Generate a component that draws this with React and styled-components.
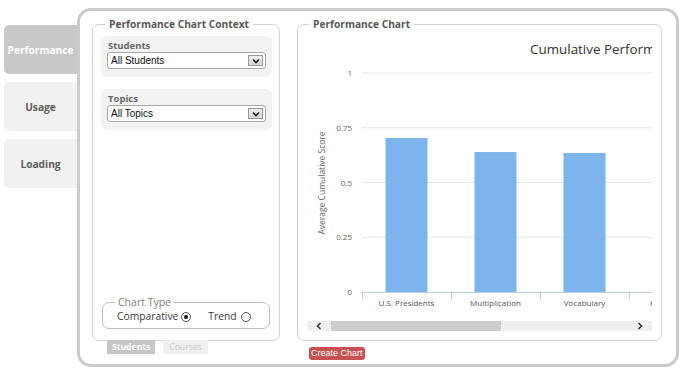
import styled, { createGlobalStyle } from "styled-components";

const GlobalStyle = createGlobalStyle`
  html, body {
    margin: 0;
    padding: 0;
    background: #fff;
  }
  body {
    width: 685px;
    height: 375px;
    overflow: hidden;
    font-family: "Open Sans", "Liberation Sans", sans-serif;
  }
`;

const Page = styled.div`
  display: flex;
  align-items: flex-start;
  padding: 8px 0 0 4px;
`;

const TabColumn = styled.div`
  display: flex;
  flex-direction: column;
  gap: 8px;
  width: 73px;
  margin-top: 17px;
`;

const SideTab = styled.div`
  height: 49px;
  display: flex;
  align-items: center;
  justify-content: center;
  border-radius: 5px 0 0 5px;
  background: ${(p) => (p.active ? "#c8c8c8" : "#f1f1f1")};
  color: ${(p) => (p.active ? "#fff" : "#5c5c5c")};
  font-size: 10.2px;
  font-weight: 700;
`;

const Box = styled.div`
  box-sizing: border-box;
  width: 602px;
  height: 359px;
  border: 3px solid #cbcbcb;
  border-radius: 14px;
  padding: 6px 14px 0 12px;
  display: flex;
  gap: 17px;
`;

const Column = styled.div`
  display: flex;
  flex-direction: column;
  width: ${(p) => p.width}px;
`;

const Panel = styled.fieldset`
  box-sizing: border-box;
  margin: 0;
  height: 324px;
  padding: ${(p) => p.pad};
  border: 1px solid #d2d2d2;
  border-radius: 7px;
  min-width: 0;
`;

const Legend = styled.legend`
  padding: 0 4px;
  margin-left: ${(p) => p.offset || 0}px;
  font-size: 10.2px;
  line-height: 14px;
  font-weight: 700;
  color: #585858;
`;

const PanelBody = styled.div`
  height: ${(p) => p.height}px;
  display: flex;
  flex-direction: column;
`;

const Group = styled.div`
  background: #f2f2f2;
  border-radius: 6px;
  padding: 4px 6px 8px;
  margin-bottom: 12px;
`;

const GroupLabel = styled.div`
  font-size: 9.5px;
  line-height: 12px;
  font-weight: 700;
  color: #666;
  padding-left: 1px;
`;

const Select = styled.div`
  box-sizing: border-box;
  height: 17px;
  background: #fff;
  border: 1px solid #a9a9a9;
  border-radius: 3px;
  display: flex;
  align-items: center;
  justify-content: space-between;
  padding: 0 2px 0 3px;
  font-family: "Liberation Sans", Arial, sans-serif;
  font-size: 10px;
  color: #111;
`;

const SelectArrow = styled.span`
  box-sizing: border-box;
  width: 15px;
  height: 11px;
  border: 1px solid #9a9a9a;
  background: linear-gradient(#eee, #d6d6d6);
  display: flex;
  align-items: center;
  justify-content: center;
`;

const TypeBox = styled.fieldset`
  margin: auto 2px 0 1px;
  padding: 0 8px 4px 14px;
  border: 1px solid #bdbdbd;
  border-radius: 7px;
`;

const TypeLegend = styled.legend`
  padding: 0 3px;
  margin-left: -2px;
  font-size: 10.5px;
  line-height: 14px;
  color: #808080;
`;

const RadioRow = styled.div`
  display: flex;
  align-items: center;
  font-size: 10.3px;
  line-height: 15px;
  color: #404040;
`;

const RadioLabel = styled.span`
  margin-right: ${(p) => p.gap}px;
`;

const Radio = styled.span`
  box-sizing: border-box;
  width: 10px;
  height: 10px;
  border: 1px solid #555;
  border-radius: 50%;
  display: inline-flex;
  align-items: center;
  justify-content: center;
  margin-right: ${(p) => p.after || 0}px;

  &::after {
    content: "";
    width: 4px;
    height: 4px;
    border-radius: 50%;
    background: ${(p) => (p.checked ? "#111" : "transparent")};
  }
`;

const SubTabs = styled.div`
  display: flex;
  gap: 8px;
  margin: -1px 0 0 15px;
`;

const SubTab = styled.div`
  height: 14px;
  padding: 0 ${(p) => p.px}px;
  display: flex;
  align-items: center;
  background: ${(p) => (p.active ? "#c6c6c6" : "#f0f0f0")};
  color: ${(p) => (p.active ? "#fff" : "#c9c9c9")};
  font-size: 8.6px;
  font-weight: ${(p) => (p.active ? 700 : 400)};
`;

const ChartFrame = styled.div`
  width: 345px;
  height: 290px;
  overflow: hidden;
`;

const ScrollTrack = styled.div`
  display: flex;
  align-items: center;
  width: 345px;
  height: 10px;
  background: #efefef;
`;

const ScrollArrow = styled.span`
  width: 24px;
  height: 10px;
  display: flex;
  align-items: center;
  justify-content: center;
`;

const ScrollThumb = styled.span`
  width: 170px;
  height: 10px;
  background: #cdcdcd;
`;

const Spacer = styled.span`
  flex: 1;
`;

const CreateButton = styled.button`
  align-self: flex-start;
  margin: 6px 0 0 12px;
  height: 13px;
  padding: 0 2px;
  border: none;
  border-radius: 3px;
  background: #c75150;
  color: #fff;
  font-family: "Liberation Sans", Arial, sans-serif;
  font-size: 9px;
  line-height: 13px;
`;

const Chevron = ({ dir }) => (
  <svg width="6" height="8" viewBox="0 0 6 8">
    <polyline
      points={dir === "left" ? "4.5,1 1.5,4 4.5,7" : "1.5,1 4.5,4 1.5,7"}
      fill="none"
      stroke="#333"
      strokeWidth="1.6"
    />
  </svg>
);

const DropArrow = () => (
  <svg width="8" height="6" viewBox="0 0 8 6">
    <polyline points="1,1.5 4,4.5 7,1.5" fill="none" stroke="#222" strokeWidth="1.6" />
  </svg>
);

const categories = [
  { name: "U.S. Presidents", value: 0.703 },
  { name: "Multiplication", value: 0.639 },
  { name: "Vocabulary", value: 0.635 },
  { name: "History", value: 0.6 },
];

const ticks = [0, 0.25, 0.5, 0.75, 1];

const ScoreChart = () => {
  const left = 55;
  const top = 42;
  const bottom = 261;
  const step = 89;
  const y = (v) => bottom - v * (bottom - top);

  return (
    <svg width="345" height="290" style={{ display: "block" }} fontFamily="'Open Sans', sans-serif">
      <text x="223" y="23" fontSize="13.4" fill="#333">
        Cumulative Performance
      </text>
      {ticks.map((t) => (
        <g key={t}>
          {t > 0 && <line x1={left} x2="345" y1={y(t)} y2={y(t)} stroke="#e4e4e4" />}
          <text x="45" y={y(t) + 3} fontSize="8" fill="#666" textAnchor="end">
            {t}
          </text>
        </g>
      ))}
      <text
        x="0"
        y="0"
        fontSize="8.5"
        fill="#666"
        textAnchor="middle"
        transform="translate(18 152) rotate(-90)"
      >
        Average Cumulative Score
      </text>
      {categories.map((c, i) => (
        <g key={c.name}>
          <rect
            x={left + i * step + 23.5}
            y={y(c.value)}
            width="42"
            height={bottom - y(c.value)}
            fill="#7cb5ec"
          />
          <line
            x1={left + i * step + 0.5}
            x2={left + i * step + 0.5}
            y1={bottom}
            y2={bottom + 7}
            stroke="#c0d0e0"
          />
          {i < 3 ? (
            <text x={left + i * step + 44.5} y="275" fontSize="8" fill="#555" textAnchor="middle">
              {c.name}
            </text>
          ) : (
            <text x="343" y="275" fontSize="8" fill="#555">
              {c.name}
            </text>
          )}
        </g>
      ))}
      <line x1={left} x2="345" y1={bottom + 0.5} y2={bottom + 0.5} stroke="#c0d0e0" />
    </svg>
  );
};

export default function App() {
  return (
    <>
      <GlobalStyle />
      <Page>
        <TabColumn>
          <SideTab active>Performance</SideTab>
          <SideTab>Usage</SideTab>
          <SideTab>Loading</SideTab>
        </TabColumn>
        <Box>
          <Column width={188}>
            <Panel pad="5px 7px 10px 8px">
              <Legend offset={4}>Performance Chart Context</Legend>
              <PanelBody height={293}>
                <Group>
                  <GroupLabel>Students</GroupLabel>
                  <Select>
                    All Students
                    <SelectArrow>
                      <DropArrow />
                    </SelectArrow>
                  </Select>
                </Group>
                <Group>
                  <GroupLabel>Topics</GroupLabel>
                  <Select>
                    All Topics
                    <SelectArrow>
                      <DropArrow />
                    </SelectArrow>
                  </Select>
                </Group>
                <TypeBox>
                  <TypeLegend>Chart Type</TypeLegend>
                  <RadioRow>
                    <RadioLabel gap={3}>Comparative</RadioLabel>
                    <Radio checked after={17} />
                    <RadioLabel gap={4}>Trend</RadioLabel>
                    <Radio />
                  </RadioRow>
                </TypeBox>
              </PanelBody>
            </Panel>
            <SubTabs>
              <SubTab active px={5}>Students</SubTab>
              <SubTab px={6}>Courses</SubTab>
            </SubTabs>
          </Column>
          <Column width={365}>
            <Panel pad="0 9px 8px 9px">
              <Legend offset={2}>Performance Chart</Legend>
              <ChartFrame>
                <ScoreChart />
              </ChartFrame>
              <ScrollTrack>
                <ScrollArrow>
                  <Chevron dir="left" />
                </ScrollArrow>
                <ScrollThumb />
                <Spacer />
                <ScrollArrow>
                  <Chevron dir="right" />
                </ScrollArrow>
              </ScrollTrack>
            </Panel>
            <CreateButton>Create Chart</CreateButton>
          </Column>
        </Box>
      </Page>
    </>
  );
}
